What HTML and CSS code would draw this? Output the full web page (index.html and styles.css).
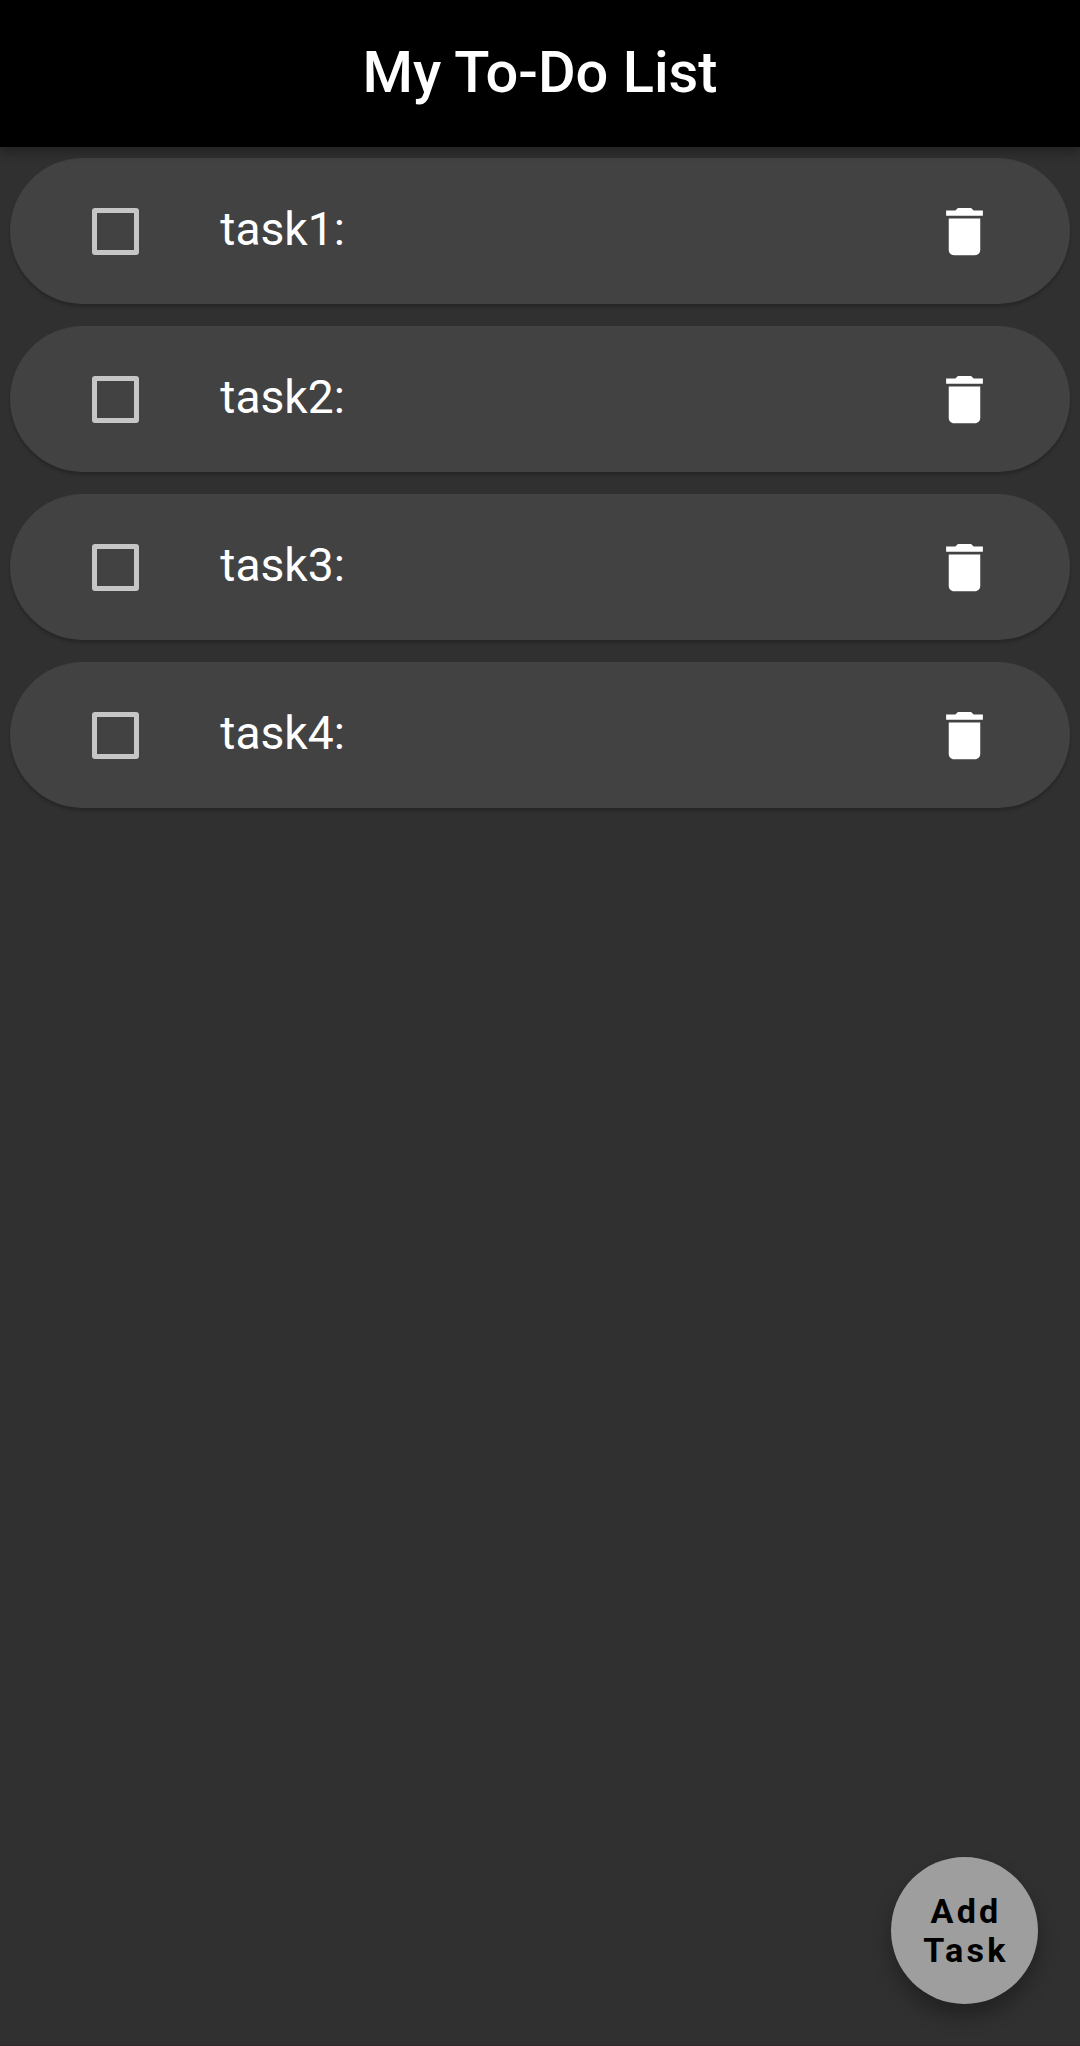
FILE: index.html
```html
<!DOCTYPE html>
<html lang="en">
<head>
<meta charset="utf-8">
<title>My To-Do List</title>
<link rel="stylesheet" href="styles.css">
</head>
<body>
<svg class="sprite" aria-hidden="true">
  <symbol id="trash" viewBox="0 0 24 24"><path d="M6 19c0 1.100.900 2 2 2h8c1.100 0 2-.900 2-2V7H6v12zM19 4h-3.500l-1-1h-5l-1 1H5v2h14V4z"/></symbol>
</svg>
<div class="app">
  <header class="app-bar"><h1 class="title">My To-Do List</h1></header>
  <main class="list">
    <div class="task"><span class="check"></span><span class="label">task1:</span><svg class="trash"><use href="#trash"/></svg></div>
    <div class="task"><span class="check"></span><span class="label">task2:</span><svg class="trash"><use href="#trash"/></svg></div>
    <div class="task"><span class="check"></span><span class="label">task3:</span><svg class="trash"><use href="#trash"/></svg></div>
    <div class="task"><span class="check"></span><span class="label">task4:</span><svg class="trash"><use href="#trash"/></svg></div>
  </main>
  <button class="fab">Add<br>Task</button>
</div>
</body>
</html>
```
FILE: styles.css
```css
* { box-sizing: border-box; }
body { margin: 0; background: #303030; color: #fff; font-family: Roboto, sans-serif; }
.sprite { display: none; }
.app { display: flex; flex-direction: column; height: 2046px; overflow: hidden; border-bottom: 1px solid #2f282c; }
.app-bar { position: relative; z-index: 1; height: 147px; flex: none; background: #000; display: flex; align-items: center; justify-content: center; padding-bottom: 3px; box-shadow: 0 5px 10px rgba(0,0,0,.3); }
.title { margin: 0; font-size: 57.750px; font-weight: 500; line-height: 68px; }
.list { flex: 1; padding: 10.600px 10.400px; display: flex; flex-direction: column; gap: 21.500px; }
.task { height: 146.500px; flex: none; border-radius: 74px; background: #424242; display: flex; align-items: center; padding: 0 73.700px 0 81.600px; box-shadow: 0 3px 3px rgba(0,0,0,.2); }
.check { width: 47px; height: 47.500px; margin-top: 1px; border: 5px solid #c6c6c6; border-radius: 3px; }
.label { flex: 1; margin-left: 81.300px; padding-bottom: 3px; font-size: 46.200px; line-height: 56px; }
.trash { width: 63px; height: 63px; margin-top: 1px; fill: #fff; }
.fab { align-self: flex-end; flex: none; margin: 0 42px 41px 0; width: 147px; height: 147px; border: 0; border-radius: 50%; background: #9e9e9e; color: #000; font: 700 34.125px/39px Roboto, sans-serif; letter-spacing: 3.200px; padding: 0 0 0 3px; box-shadow: 0 12px 20px rgba(0,0,0,.3); }
```
